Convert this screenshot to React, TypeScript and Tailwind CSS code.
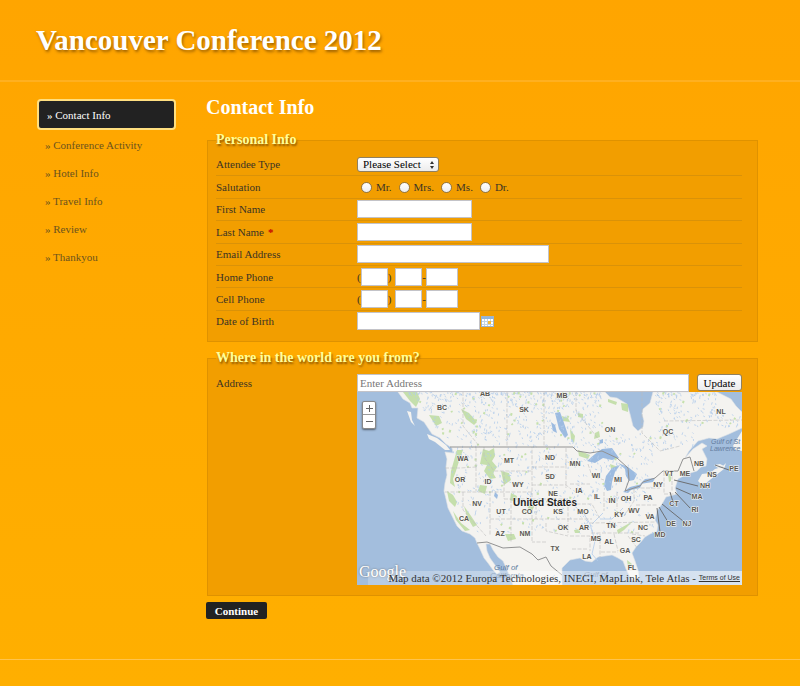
import React from "react";

const navItems = ["Contact Info", "Conference Activity", "Hotel Info", "Travel Info", "Review", "Thankyou"];
const salutations = ["Mr.", "Mrs.", "Ms.", "Dr."];

const field = "h-[18px] border border-[#c3c3c8] bg-white px-0.5 text-[11px] text-[#333] outline-none";

const mapLabels: [string, number, number][] = [
  ["BC", 442, 409], ["AB", 485, 395], ["SK", 524, 411], ["MB", 562, 397], ["ON", 610, 431], ["QC", 668, 433],
  ["NL", 721, 413], ["WA", 463, 460], ["MT", 509, 462], ["ND", 550, 459], ["MN", 575, 465], ["OR", 460, 481],
  ["ID", 488, 483], ["WY", 518, 486], ["SD", 550, 478], ["WI", 596, 477], ["MI", 618, 481], ["NY", 658, 486],
  ["VT", 669, 475], ["ME", 685, 475], ["NB", 699, 465], ["NS", 712, 476], ["PE", 734, 470], ["NH", 705, 487],
  ["NE", 553, 495], ["IA", 579, 492], ["IL", 597, 498], ["IN", 612, 502], ["OH", 626, 500], ["PA", 648, 499],
  ["MA", 697, 498], ["CT", 674, 505], ["RI", 695, 511], ["NV", 477, 505], ["UT", 501, 513], ["CO", 527, 513],
  ["KS", 558, 513], ["MO", 583, 513], ["KY", 619, 516], ["WV", 634, 512], ["VA", 650, 518], ["DE", 671, 525],
  ["NJ", 687, 525], ["MD", 660, 536], ["CA", 464, 520], ["AZ", 500, 535], ["NM", 525, 535], ["OK", 563, 529],
  ["AR", 584, 529], ["TN", 611, 527], ["NC", 643, 529], ["TX", 555, 550], ["MS", 596, 540], ["AL", 609, 543],
  ["SC", 636, 541], ["GA", 625, 552], ["LA", 587, 558], ["FL", 632, 569],
];

const land =
  "M398 391L403 398L410 402L412 407L418 407L417 417L424 421L428 427L432 433L440 437L446 443L452 447L453 452L445 451L447 458L446 466L447 474L445 482L444 490L446 498L448 507L453 517L457 525L462 530L470 533L475 537L477 542L480 548L484 557L488 562L493 569L497 573L500 571L495 564L490 557L487 550L486 543L490 543L493 549L498 556L503 560L508 571L513 584L562 584L562 567L570 559L580 557L585 560L592 561L598 556L612 554L618 557L623 560L626 568L630 576L635 581L639 577L638 569L635 560L632 552L636 546L640 542L645 536L650 533L657 530L658 524L655 519L657 510L662 503L666 496L677 493L675 487L678 478L687 473L697 470L701 466L706 465L707 458L702 448L707 445L702 442L693 448L685 457L689 450L698 440L709 437L717 438L729 433L742 427L742 411L736 405L731 398L717 391L653 391L650 402L643 408L642 413L644 420L643 426L638 430L633 425L630 413L627 403L617 397L610 396L605 391Z";

const greens = [
  "M403 391L417 391L420 398L416 406L410 400Z", "M461 408L469 412L477 421L474 424L466 418Z",
  "M429 414L439 415L442 422L436 425Z", "M483 448L489 450L494 447L495 455L492 460L497 466L493 472L496 477L490 478L484 470L487 464L480 463Z",
  "M457 449L463 449L460 457L456 470L453 478L455 486L450 482L451 470Z", "M501 470L509 472L511 479L504 484Z",
  "M447 490L453 494L457 501L455 506L449 500Z", "M464 505L471 515L477 524L473 526L467 516Z", "M453 510L461 522L470 529L465 530L456 519Z",
  "M480 484L487 485L485 493L478 490Z",
  "M608 398L617 401L616 404L608 401Z", "M621 402L628 403L628 411L622 409Z", "M562 415L568 417L570 421L563 420Z",
  "M595 432L599 430L600 436L594 438Z", "M578 412L583 413L583 417L578 416Z", "M570 428L575 435L574 442L571 438Z",
  "M578 449L590 454L588 458L579 455Z", "M617 529L628 523L633 520L624 529L618 533Z", "M627 559L632 563L633 568L628 566Z",
  "M505 533L514 533L516 538L508 540Z", "M511 492L517 495L515 501L510 499Z", "M530 498L534 506L531 512L527 505Z",
  "M574 529L580 528L580 532L575 532Z", "M668 473L671 473L671 480L669 481Z", "M610 463L618 466L615 470L611 468Z",
];

const lakes = [
  "M587 460L595 453L602 448L612 447L619 457L612 459L603 457L595 462Z",
  "M620 464L612 467L606 475L604 484L607 490L611 489L612 481L615 471Z",
  "M618 462L628 466L637 473L634 479L629 480L626 475L625 468Z",
  "M623 491L630 486L642 483L640 487L631 489L628 492Z", "M640 483L645 478L655 477L653 481Z",
  "M555 412L560 411L563 419L568 434L565 437L559 428Z", "M551 421L555 424L557 432L553 430Z",
  "M600 439L603 438L603 442L599 443Z", "M495 491L498 494L497 498L494 495Z", "M593 488L594 491L592 492Z",
];

const stateLines =
  "M463 391V425L480 446M507 391V446M544 391V446M576 391V410L600 440M476 446V466M476 466V490M445 467H460L476 466M445 491H506M484 446V456L494 470H532V446M504 470V498M532 470V492M506 491H532M463 491V509L486 535M490 491V535M511 498V542M490 518H568M532 492V541M504 498H536L536 518M533 466H566M532 484H566L571 488M566 447V487M568 498H540M568 506V534M570 483H590M571 503H592L600 518M568 518H592M546 541H532M546 522V530L568 535M570 535H590V550M572 548H588M591 532H640M600 533V556M614 533L618 550M601 551H618M590 522L655 521M604 491V510M617 491V508M634 488V500L624 515M635 487H660M636 504H658M632 533L645 535M628 535L638 548M664 471V493M672 469V490M664 493H677M588 463L592 475L604 479M642 391V432L660 450L680 445M664 420L742 419";

const leaders = "M715 464L729 469M674 479L698 485M676 487L692 494M675 491L690 507M670 491L673 501M662 503L683 520M659 506L668 521M657 507L660 531";

function inMainland(x: number, y: number) {
  if (y < 448) {
    const west = 407 + (y - 391) * 0.85;
    const bay = x > 602 && x < 655 && y < 432;
    const gulf = x > 694 && y > 425;
    const labrador = x > 716 && y < 412;
    return x > west && !bay && !gulf && !labrador;
  }
  return y < 532 && x > 452 + Math.max(0, y - 495) * 0.6 && x < 653;
}

const specks = Array.from({ length: 2000 }, (_, i) => {
  const rx = Math.abs(Math.sin(i * 12.9898 + 4.1) * 43758.5453) % 1;
  const ry = Math.abs(Math.sin(i * 78.233 + 1.7) * 24634.6345) % 1;
  const turn = Math.abs(Math.sin(i * 3.71) * 917.31) % 1;
  const x = 398 + rx * 344;
  const y = 391 + Math.pow(ry, 1.7) * 145;
  return { x, y, dx: (turn - 0.3) * 3, dy: 0.6 + (1 - turn) * 2, green: i % 13 === 0 };
}).filter((s) => inMainland(s.x, s.y));

const waterSpecks = specks.filter((s) => !s.green).map((s) => `M${s.x} ${s.y}l${s.dx} ${s.dy}`).join("");
const greenSpecks = specks.filter((s) => s.green).map((s) => `M${s.x} ${s.y}l${s.dx} ${s.dy}`).join("");

function MapDrawing() {
  return (
    <svg viewBox="357 391 385 193" preserveAspectRatio="xMidYMid slice" className="block h-[193px] w-full" role="img" aria-label="Map of the United States">
      <rect x="157" y="291" width="785" height="393" fill="#a3bedd" />
      <path d={land} fill="#f4f3f0" stroke="#dfe3e6" strokeWidth="0.6" />
      <g fill="#f4f3f0">
        <path d="M407 410L411 411L412 419L415 425L411 421Z" />
        <path d="M427 433L437 437L446 444L450 449L445 449L435 441L429 438Z" />
        <path d="M698 480L702 473L710 472L715 468L722 466L726 462L724 468L715 475L706 482L701 483Z" />
        <path d="M714 464L720 463L724 465L718 467Z" />
        <path d="M733 445L737 438L742 430V450L736 449Z" />
      </g>
      {greens.map((d) => <path key={d} d={d} fill="#bcdba0" opacity="0.85" />)}
      {lakes.map((d) => <path key={d} d={d} fill="#9cbbe0" />)}
      <path d={waterSpecks} fill="none" stroke="#b4cdeb" strokeWidth="0.8" />
      <path d={greenSpecks} fill="none" stroke="#c6e1ad" strokeWidth="2" />
      <path d="M548 580L555 574M571 502L584 513L590 523L595 540L592 553L598 560M603 512L592 523M623 507L612 518L600 518" fill="none" stroke="#b3cceb" strokeWidth="0.8" />
      <path d={stateLines} fill="none" stroke="#bdbdbd" strokeWidth="0.6" strokeDasharray="4 1.5" />
      <path d="M450 446H573L577 450L590 452L602 450L617 457L628 467L629 479L625 490L640 485L643 481L655 477L663 470H678L683 458L690 456L694 470M477 542L487 541L503 547L520 546L532 553L538 559L546 556L551 565L562 574" fill="none" stroke="#929292" strokeWidth="1" />
      <path d={leaders} fill="none" stroke="#666" strokeWidth="0.9" />
      <g className="font-['Liberation_Sans',sans-serif] text-[8px] italic" fill="#637d9f">
        <text x="494" y="569">Gulf of</text>
        <text x="490" y="577">California</text>
        <text x="584" y="576">Gulf of</text>
      </g>
      <g className="font-['Liberation_Sans',sans-serif] text-[7px] italic" fill="#637d9f">
        <text x="711" y="443">Gulf of St</text>
        <text x="710" y="450">Lawrence</text>
      </g>
      <g className="font-['Liberation_Sans',sans-serif] text-[7px] font-bold" fill="#5a5751" stroke="#f8f8f5" strokeWidth="1" paintOrder="stroke" textAnchor="middle">
        {mapLabels.map(([label, x, y]) => <text key={label} x={x} y={y}>{label}</text>)}
      </g>
      <text x="545" y="505" textAnchor="middle" className="font-['Liberation_Sans',sans-serif] text-[10px] font-bold" fill="#222" stroke="#f8f8f5" strokeWidth="1" paintOrder="stroke">United States</text>
    </svg>
  );
}

function Row({ label, id, required, children }: { label: string; id?: string; required?: boolean; children: React.ReactNode }) {
  return (
    <div className="flex items-center border-t border-[#da9208] first:border-t-0">
      {id ? (
        <label htmlFor={id} className="w-[141px] shrink-0">
          {label}{required && <span className="ml-1 font-bold text-[#c40000]">*</span>}
        </label>
      ) : (
        <span className="w-[141px] shrink-0">{label}</span>
      )}
      <div className="flex min-w-0 flex-1 items-center">{children}</div>
    </div>
  );
}

function Phone({ id }: { id: string }) {
  return (
    <>
      <span>(</span>
      <input id={id} aria-label="Area code" className={`${field} w-[27px]`} />
      <span>)</span>
      <input aria-label="Prefix" className={`${field} ml-1 w-[27px]`} />
      <span>-</span>
      <input aria-label="Line number" className={`${field} w-8`} />
    </>
  );
}

const legend = "text-[14px] leading-4 font-bold text-[#ffff99] [text-shadow:1px_2px_2px_rgba(90,50,0,0.65)]";
const panel = "ml-px min-w-0 border border-[#df9200] bg-[#f29e00] pr-[15px] pl-2";
const lightButton = "rounded-[3px] border border-[#8f8060] bg-linear-to-b from-white to-[#ececec] text-[11px] text-black";

export default function App() {
  return (
    <div className="flex min-h-screen flex-col bg-linear-to-b from-[#ffa500] to-[#ffaf00] font-['Liberation_Serif',serif] text-[11px] leading-4 text-[#3b3424]">
      <header className="flex h-[82px] items-center border-b-2 border-[#ffb020] pl-9">
        <h1 className="text-[29px] leading-9 font-bold text-white [text-shadow:1px_2px_3px_rgba(90,50,0,0.6)]">Vancouver Conference 2012</h1>
      </header>

      <div className="flex flex-1 items-start pt-[17px] pr-[42px] pl-[37px]">
        <nav className="w-[139px] shrink-0" aria-label="Registration steps">
          <ul>
            {navItems.map((item, i) => (
              <li key={item}>
                <a
                  href="#"
                  className={
                    i === 0
                      ? "mb-px flex h-[31px] items-center rounded border-2 border-[#ffdf80] bg-[#222] pl-2 text-white"
                      : "flex h-7 items-center pl-2 text-[#6b531f]"
                  }
                >
                  » {item}
                </a>
              </li>
            ))}
          </ul>
        </nav>

        <main className="ml-[30px] min-w-0 flex-1">
          <h2 className="mb-[17px] text-[20px] leading-4 font-bold text-white">Contact Info</h2>

          <form onSubmit={(e) => e.preventDefault()}>
            <fieldset className={`${panel} mb-2 pb-[9px]`}>
              <legend className={legend}>Personal Info</legend>
              <div className="grid h-[184px] auto-rows-fr pt-[5px]">
                <Row label="Attendee Type" id="attendee">
                  <span className="relative">
                    <select id="attendee" className={`${lightButton} block h-[15px] w-[82px] appearance-none pl-[5px] leading-3`}>
                      <option>Please Select</option>
                    </select>
                    <svg viewBox="0 0 6 8" className="pointer-events-none absolute top-1 right-1 h-2 w-1.5" fill="#333">
                      <path d="M3 0L5 3H1ZM1 5H5L3 8Z" />
                    </svg>
                  </span>
                </Row>
                <Row label="Salutation">
                  {salutations.map((s) => (
                    <label key={s} className="mr-[7px] ml-1 flex items-center gap-1 last:mr-0 [&+label]:ml-0">
                      <input type="radio" name="salutation" className="size-[11px] appearance-none rounded-full border border-[#8f7648] bg-linear-to-b from-white to-[#eee] checked:border-4" />
                      {s}
                    </label>
                  ))}
                </Row>
                <Row label="First Name" id="first"><input id="first" className={`${field} w-[115px]`} /></Row>
                <Row label="Last Name" id="last" required><input id="last" className={`${field} w-[115px]`} /></Row>
                <Row label="Email Address" id="email"><input id="email" type="email" className={`${field} w-48`} /></Row>
                <Row label="Home Phone" id="home"><Phone id="home" /></Row>
                <Row label="Cell Phone" id="cell"><Phone id="cell" /></Row>
                <Row label="Date of Birth" id="birth">
                  <input id="birth" className={`${field} w-[123px]`} />
                  <button type="button" aria-label="Choose date" className="ml-px">
                    <svg viewBox="0 0 13 11" className="block h-[11px] w-[13px]">
                      <rect x="0.5" y="0.5" width="12" height="10" fill="#fff" stroke="#9fb4cc" />
                      <path d="M1 2H12" stroke="#91b6dc" strokeWidth="2" />
                      <path d="M3.5 3V10M6.5 3V10M9.5 3V10M1 5.5H12M1 8.5H12" stroke="#c3d4e4" />
                      <rect x="7" y="5" width="3" height="3" fill="#f6bd3b" />
                    </svg>
                  </button>
                </Row>
              </div>
            </fieldset>

            <fieldset className={`${panel} mb-1.5 pb-2.5`}>
              <legend className={legend}>Where in the world are you from?</legend>
              <div className="flex items-start pt-2">
                <label htmlFor="address" className="w-[141px] shrink-0 pt-px">Address</label>
                <div className="min-w-0 flex-1">
                  <div className="flex items-start gap-2">
                    <input id="address" placeholder="Enter Address" className={`${field} min-w-0 flex-1 placeholder:text-[#777]`} />
                    <button type="button" className={`${lightButton} h-[17px] w-[45px] leading-3`}>Update</button>
                  </div>
                  <div className="relative overflow-hidden">
                    <MapDrawing />
                    <div className="absolute top-[9px] left-[5px] flex w-[14px] flex-col rounded-xs border border-[#888] bg-white shadow-[0_1px_2px_rgba(0,0,0,0.5)]">
                      <button type="button" aria-label="Zoom in" className="flex h-[13px] items-center justify-center border-b border-[#999]">
                        <svg viewBox="0 0 7 7" className="size-[7px]"><path d="M0 3.5H7M3.5 0V7" stroke="#666" /></svg>
                      </button>
                      <button type="button" aria-label="Zoom out" className="flex h-[13px] items-center justify-center">
                        <svg viewBox="0 0 7 7" className="size-[7px]"><path d="M0 3.5H7" stroke="#666" /></svg>
                      </button>
                    </div>
                    <span className="absolute bottom-[3px] left-0.5 text-[16px] leading-5 text-white [text-shadow:0_0_2px_#666]">Google</span>
                    <div className="absolute right-0 bottom-0 flex h-[14px] items-center justify-end bg-linear-to-r from-white/20 to-white/60 pr-0.5 pl-5 text-[#333]">
                      <span className="text-[11px] whitespace-nowrap">Map data ©2012 Europa Technologies, INEGI, MapLink, Tele Atlas -&nbsp;</span>
                      <a href="#" className="font-['Liberation_Sans',sans-serif] text-[7px] whitespace-nowrap underline">Terms of Use</a>
                    </div>
                  </div>
                </div>
              </div>
            </fieldset>

            <button type="submit" className="block h-[17px] w-[61px] rounded-xs bg-[#222] text-[11px] leading-4 font-bold text-white">Continue</button>
          </form>
        </main>
      </div>
      <footer className="h-[27px] border-t border-[#ffc44d]" />
    </div>
  );
}
